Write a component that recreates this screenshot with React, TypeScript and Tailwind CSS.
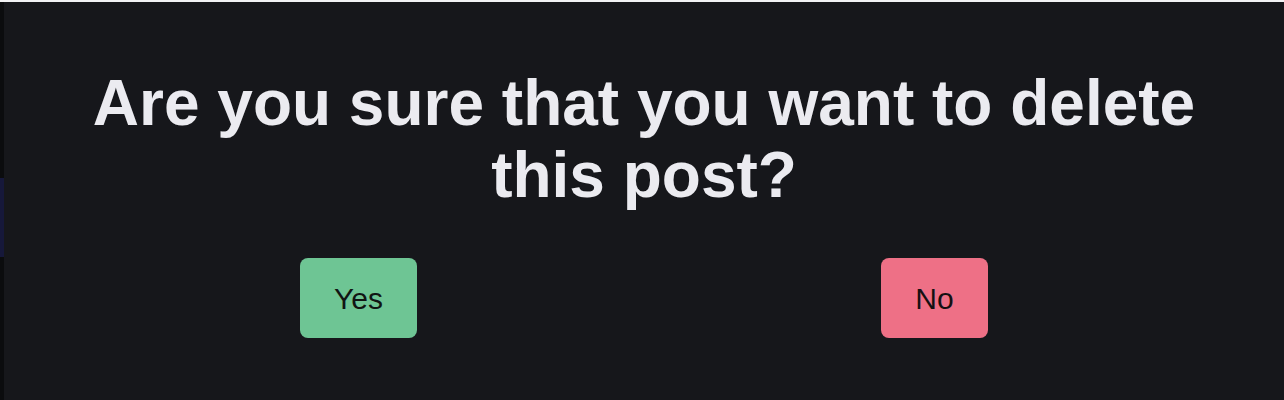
export default function App() {
  return (
    <div className="flex flex-col h-[400px] w-full bg-[#16171b] font-['Liberation_Sans',Arial,sans-serif]">
      {/* top edge */}
      <div className="h-[2px] w-full bg-[#f2f2f4]" />

      <div className="flex flex-1">
        {/* left edge strip */}
        <div className="flex flex-col w-[4px] bg-[#0b0c0e]">
          <div className="h-[176px]" />
          <div className="h-[79px] bg-[#16183a]" />
        </div>

        {/* dialog content */}
        <div className="flex flex-1 flex-col px-16 pt-[65px]">
          <h1 className="text-center text-[64px] leading-[72px] font-bold text-[#ebebf0]">
            Are you sure that you want to delete this post?
          </h1>

          <div className="mt-[47px] flex justify-around">
            <button className="flex h-[80px] w-[117px] items-center justify-center rounded-lg bg-[#6ec594] text-[30px] text-[#111513]">
              Yes
            </button>
            <button className="flex h-[80px] w-[107px] items-center justify-center rounded-lg bg-[#ee7086] text-[30px] text-[#151012]">
              No
            </button>
          </div>
        </div>
      </div>
    </div>
  );
}
